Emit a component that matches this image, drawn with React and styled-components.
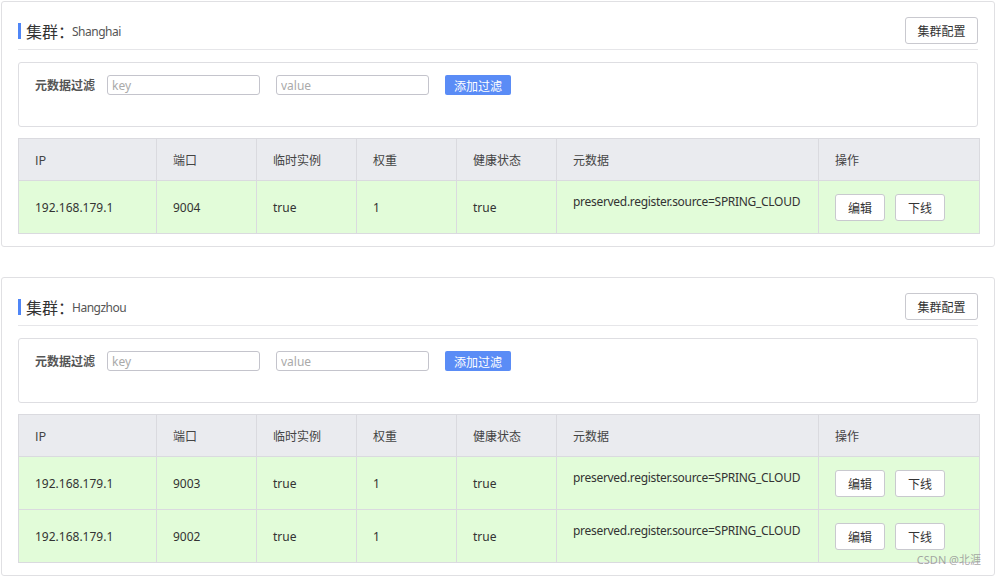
import React from "react";
import styled, { createGlobalStyle } from "styled-components";

const Global = createGlobalStyle`
  html, body { margin: 0; padding: 0; background: #fff; }
  body { font-family: "Noto Sans", "Noto Sans CJK SC", sans-serif; color: #333; }
  * { box-sizing: border-box; }
`;

const Page = styled.div`
  position: relative;
  width: 997px;
  padding: 1px 2px 0 1px;
  display: flex;
  flex-direction: column;
  gap: 30px;
`;

const Card = styled.section`
  border: 1px solid #e0e0e3;
  border-radius: 3px;
  padding: 15px 16px 12px 16px;
  background: #fff;
`;

const Header = styled.div`
  display: flex;
  align-items: center;
  justify-content: space-between;
  padding-bottom: 5px;
  border-bottom: 1px solid #e6e6e9;
`;

const Title = styled.div`
  display: flex;
  align-items: center;
  height: 16px;
  border-left: 3px solid #4f86f7;
  padding-left: 5px;
  margin-top: 1px;
`;

const TitleMain = styled.span`
  font-family: "Noto Sans CJK SC", sans-serif;
  font-size: 16px;
  color: #333;
  line-height: 16px;
`;

const TitleSub = styled.span`
  font-size: 12px;
  color: #555;
  margin-left: -2px;
  letter-spacing: -0.5px;
`;

const Button = styled.button`
  font-family: "Noto Sans CJK SC", sans-serif;
  font-size: 12px;
  color: #333;
  background: #fff;
  border: 1px solid #c9c9cf;
  border-radius: 3px;
  height: 27px;
  width: ${(p) => p.$w || 50}px;
  padding: 0;
  cursor: pointer;
`;

const FilterBox = styled.div`
  margin-top: 12px;
  height: 65px;
  border: 1px solid #dedee2;
  border-radius: 3px;
  padding: 12px 16px 0 16px;
  display: flex;
  align-items: flex-start;
  gap: 16px;
`;

const FilterLabel = styled.label`
  font-family: "Noto Sans CJK SC", sans-serif;
  font-size: 12px;
  font-weight: 700;
  color: #555;
  line-height: 20px;
  margin-right: -4px;
`;

const Input = styled.input`
  width: 153px;
  height: 20px;
  border: 1px solid #c4c4cc;
  border-radius: 3px;
  padding: 0 4px;
  font-family: "Noto Sans", sans-serif;
  font-size: 12px;
  color: #333;
  outline: none;
  &::placeholder { color: #aaa; }
`;

const PrimaryButton = styled.button`
  height: 20px;
  width: 66px;
  border: none;
  border-radius: 2px;
  background: #5a8cf6;
  color: #fff;
  font-family: "Noto Sans CJK SC", sans-serif;
  font-size: 12px;
  padding: 0;
`;

const Table = styled.table`
  margin-top: 11px;
  width: 100%;
  border-collapse: collapse;
  table-layout: fixed;
  font-size: 12px;
`;

const Th = styled.th`
  height: 42px;
  background: #eaebef;
  border: 1px solid #dadadf;
  text-align: left;
  font-weight: normal;
  font-family: "Noto Sans CJK SC", sans-serif;
  color: #444;
  padding: 0 0 0 16px;
`;

const Td = styled.td`
  height: 53px;
  background: #e2fcd9;
  border: 1px solid #dadadf;
  padding: 0 0 0 16px;
  color: #333;
  vertical-align: middle;
`;

const Meta = styled.div`
  margin-bottom: 12px;
  letter-spacing: -0.3px;
`;

const Ops = styled.div`
  display: flex;
  gap: 10px;
`;

const Watermark = styled.div`
  position: absolute;
  right: 16px;
  bottom: 9px;
  font-family: "Noto Sans", "Noto Sans CJK SC", sans-serif;
  font-size: 11px;
  color: rgba(150, 150, 150, 0.85);
`;

const cols = [138, 100, 100, 100, 100, 262, 161];
const heads = ["IP", "端口", "临时实例", "权重", "健康状态", "元数据", "操作"];

function Cluster({ name, rows }) {
  return (
    <Card>
      <Header>
        <Title>
          <TitleMain>集群：</TitleMain>
          <TitleSub>{name}</TitleSub>
        </Title>
        <Button $w={73}>集群配置</Button>
      </Header>
      <FilterBox>
        <FilterLabel>元数据过滤</FilterLabel>
        <Input placeholder="key" />
        <Input placeholder="value" />
        <PrimaryButton>添加过滤</PrimaryButton>
      </FilterBox>
      <Table>
        <colgroup>
          {cols.map((w, i) => (
            <col key={i} style={{ width: w }} />
          ))}
        </colgroup>
        <thead>
          <tr>
            {heads.map((h) => (
              <Th key={h}>{h}</Th>
            ))}
          </tr>
        </thead>
        <tbody>
          {rows.map((port) => (
            <tr key={port}>
              <Td>192.168.179.1</Td>
              <Td>{port}</Td>
              <Td>true</Td>
              <Td>1</Td>
              <Td>true</Td>
              <Td>
                <Meta>preserved.register.source=SPRING_CLOUD</Meta>
              </Td>
              <Td>
                <Ops>
                  <Button>编辑</Button>
                  <Button>下线</Button>
                </Ops>
              </Td>
            </tr>
          ))}
        </tbody>
      </Table>
    </Card>
  );
}

export default function App() {
  return (
    <>
      <Global />
      <Page>
        <Cluster name="Shanghai" rows={["9004"]} />
        <Cluster name="Hangzhou" rows={["9003", "9002"]} />
        <Watermark>CSDN @北涯</Watermark>
      </Page>
    </>
  );
}
